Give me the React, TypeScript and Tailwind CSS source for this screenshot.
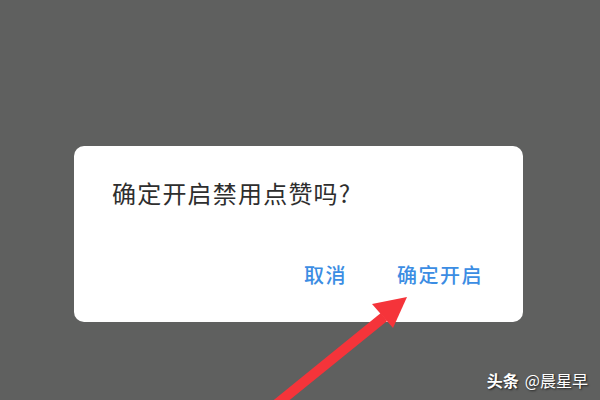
import { useState } from 'react';

const font = { fontFamily: '"Noto Sans CJK SC", "Noto Sans", sans-serif' };

// Red pointer arrow drawn over the dialog's confirm button
function PointerArrow() {
  return (
    <svg className="absolute left-0 top-0 pointer-events-none" width="600" height="400" viewBox="0 0 600 400">
      <line x1="262" y1="416" x2="384" y2="317" stroke="#f5343a" strokeWidth="10" strokeLinecap="butt" />
      <polygon points="407,297 372,304 393,328" fill="#f5343a" />
    </svg>
  );
}

export default function App() {
  const [open, setOpen] = useState(true);
  const [status, setStatus] = useState('');

  return (
    <div className="relative w-[600px] h-[400px] overflow-hidden bg-[#5f605f]" style={font}>
      <div className="flex justify-center pt-[146px] pl-[1px] pr-[4px]">
        {open && (
          <div className="w-[449px] h-[176px] bg-white rounded-[10px] flex flex-col">
            <div className="pl-[38px] pt-[31px] text-[24px] leading-[32px] tracking-[1.2px] text-[#2e2e2e]">
              确定开启禁用点赞吗?
            </div>
            <div className="flex justify-end items-center gap-[50px] pr-[40px] mt-auto mb-[34px]">
              <button
                className="text-[20px] leading-[26px] tracking-[1.5px] text-[#3b8de3] font-medium"
                onClick={() => setStatus('cancel')}
              >
                取消
              </button>
              <button
                className="text-[20px] leading-[26px] tracking-[1.5px] text-[#3b8de3] font-medium"
                onClick={() => {
                  setStatus('ok');
                  setOpen(true);
                }}
              >
                确定开启
              </button>
            </div>
          </div>
        )}
      </div>

      <PointerArrow />

      {/* watermark */}
      <div
        className="absolute right-[12px] bottom-[10px] text-[16px] leading-[20px] text-white flex items-center gap-[6px] [text-shadow:1px_1px_2px_rgba(0,0,0,0.7)]"
        data-status={status}
      >
        <span className="font-bold">头条</span>
        <span>@晨星早</span>
      </div>
    </div>
  );
}
